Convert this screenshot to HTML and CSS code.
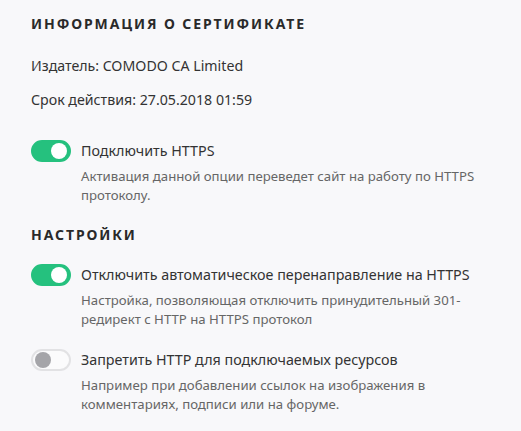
FILE: index.html
```
<!DOCTYPE html>
<html lang="ru">
<head>
  <meta charset="UTF-8">
  <title>Сертификат</title>
  <link rel="stylesheet" href="styles.css">
</head>
<body>
  <div class="panel">
    <h3 class="section-title">Информация о сертификате</h3>
    <p class="info-line">Издатель: COMODO CA Limited</p>
    <p class="info-line">Срок действия: 27.05.2018 01:59</p>

    <div class="option">
      <span class="switch on"><span class="knob"></span></span>
      <div class="option-body">
        <div class="option-label">Подключить HTTPS</div>
        <div class="option-desc">Активация данной опции переведет сайт на работу по HTTPS протоколу.</div>
      </div>
    </div>

    <h3 class="section-title">Настройки</h3>

    <div class="option">
      <span class="switch on"><span class="knob"></span></span>
      <div class="option-body">
        <div class="option-label">Отключить автоматическое перенаправление на HTTPS</div>
        <div class="option-desc">Настройка, позволяющая отключить принудительный 301-редирект с HTTP на HTTPS протокол</div>
      </div>
    </div>

    <div class="option">
      <span class="switch"><span class="knob"></span></span>
      <div class="option-body">
        <div class="option-label">Запретить HTTP для подключаемых ресурсов</div>
        <div class="option-desc">Например при добавлении ссылок на изображения в комментариях, подписи или на форуме.</div>
      </div>
    </div>
  </div>
</body>
</html>
```

FILE: styles.css
```
body {
  margin: 0;
  background: #f8f8fa;
  font-family: "Noto Sans", "Open Sans", sans-serif;
  color: #333;
}

.panel {
  padding: 14px 20px 0 31px;
}

/* section headings */
.section-title {
  margin: 0;
  font-size: 14px;
  font-weight: bold;
  letter-spacing: 1.9px;
  text-transform: uppercase;
  line-height: 20px;
  color: #2a2a2a;
}

.info-line {
  margin: 22px 0 0;
  font-size: 14.2px;
  line-height: 20px;
}
.info-line + .info-line {
  margin-top: 14px;
}

.option {
  display: flex;
  gap: 10px;
  margin-top: 30px;
}
.option + .section-title {
  margin-top: 20px;
}
.section-title + .option {
  margin-top: 19px;
}
.option + .option {
  margin-top: 20px;
}

.switch {
  flex: none;
  width: 40px;
  height: 22px;
  border-radius: 11px;
  box-sizing: border-box;
  border: 2px solid #e2e2e4;
  background: #fbfbfc;
  position: relative;
}
.switch .knob {
  position: absolute;
  top: 1px;
  left: 2px;
  width: 16px;
  height: 16px;
  border-radius: 50%;
  background: #a5a5a9;
}
.switch.on {
  border-color: #25c17e;
  background: #25c17e;
}
.switch.on .knob {
  left: auto;
  right: 2px;
  background: #fff;
}

.option-label {
  font-size: 14.3px;
  line-height: 22px;
}
.option-desc {
  margin-top: 5px;
  font-size: 13.2px;
  line-height: 19px;
  color: #666;
  max-width: 410px;
}
```
